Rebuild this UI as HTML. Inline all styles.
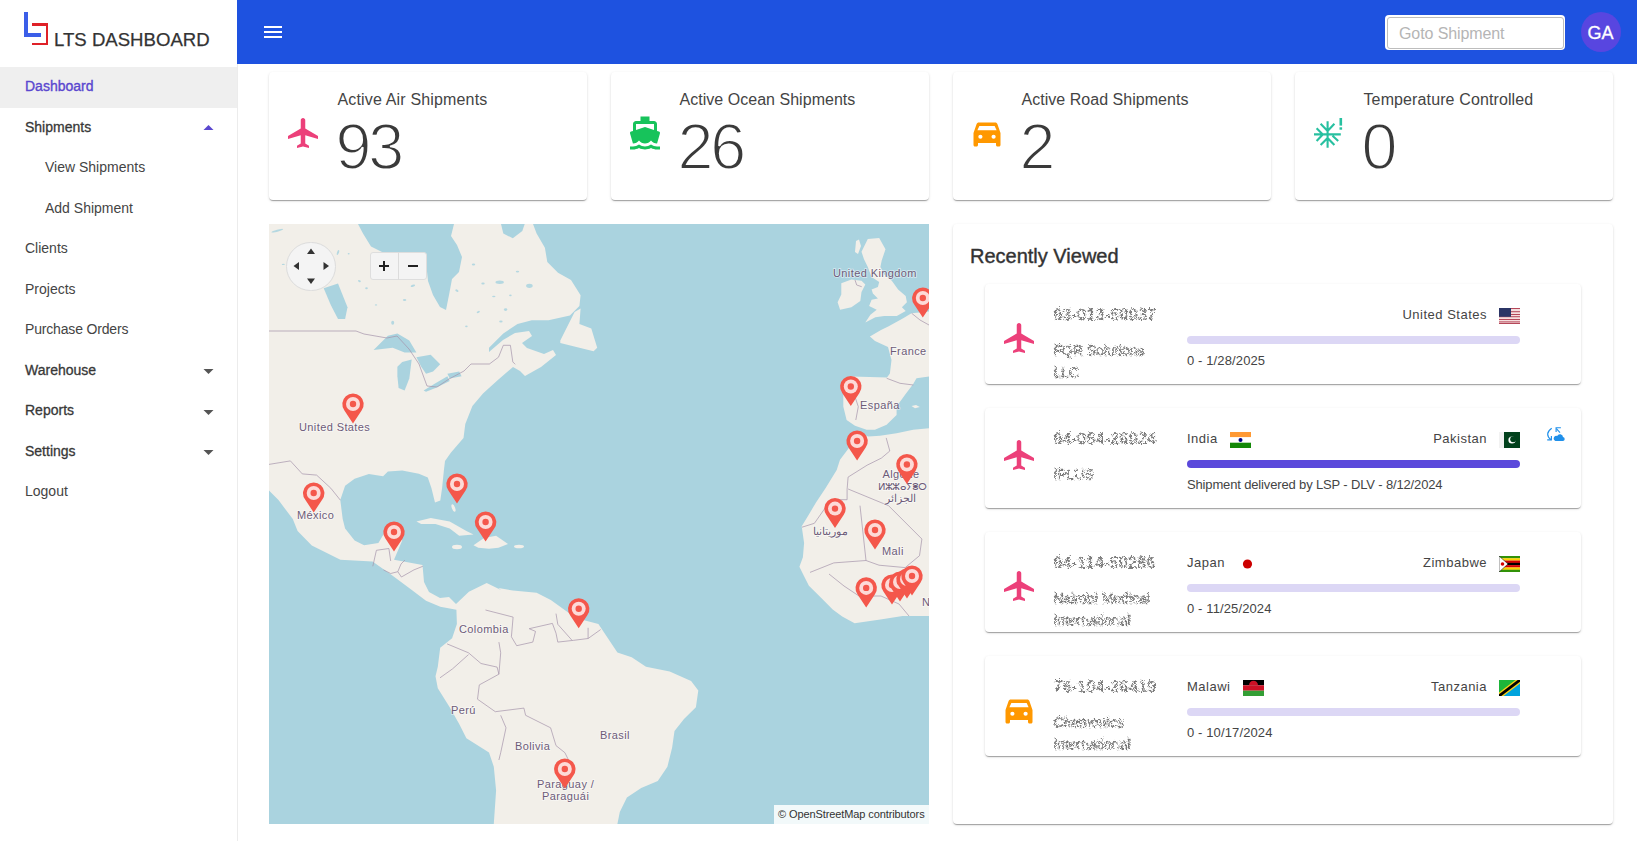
<!DOCTYPE html>
<html><head><meta charset="utf-8"><title>LTS Dashboard</title>
<style>
*{box-sizing:border-box;margin:0;padding:0}
html,body{width:1637px;height:841px;overflow:hidden;background:#fff}
body{position:relative;font-family:"Liberation Sans",sans-serif}
.abs{position:absolute}
.t{position:absolute;white-space:nowrap}
.paper{background:#fff;border-radius:4px;box-shadow:0px 2px 1px -1px rgba(0,0,0,0.2),0px 1px 1px 0px rgba(0,0,0,0.14),0px 1px 3px 0px rgba(0,0,0,0.12)}
svg{display:block}
</style></head><body>
<svg width="0" height="0" style="position:absolute"><filter id="noise" x="-5%" y="-25%" width="110%" height="150%" color-interpolation-filters="sRGB"><feTurbulence type="turbulence" baseFrequency="1.2" numOctaves="1" seed="7" result="n"/><feDisplacementMap in="SourceGraphic" in2="n" scale="4" xChannelSelector="R" yChannelSelector="B" result="d"/><feTurbulence type="fractalNoise" baseFrequency="1.6" numOctaves="1" seed="2" result="n2"/><feColorMatrix in="n2" type="matrix" values="0 0 0 0 0  0 0 0 0 0  0 0 0 0 0  0 0 0 9 -3.2" result="m"/><feComposite in="d" in2="m" operator="in" result="c"/><feGaussianBlur in="c" stdDeviation="0.25"/></filter></svg>
<div class="abs" style="left:237px;top:0;width:1px;height:841px;background:#ececec"></div>
<div class="abs" style="left:24px;top:12px;width:4px;height:24.7px;background:#3b5ee8"></div><div class="abs" style="left:24px;top:33px;width:17.2px;height:3.7px;background:#3b5ee8"></div><div class="abs" style="left:32px;top:23px;width:16.2px;height:2.7px;background:#df2128"></div><div class="abs" style="left:45.5px;top:23px;width:2.7px;height:22.2px;background:#df2128"></div><div class="abs" style="left:32px;top:42.5px;width:16.2px;height:2.7px;background:#df2128"></div>
<div class="t" style="left:54.0px;top:30.6px;font-size:18.6px;line-height:18.6px;color:#333;font-weight:400;letter-spacing:0px;-webkit-text-stroke:0.25px #333;">LTS DASHBOARD</div>
<div class="abs" style="left:0;top:67px;width:237px;height:41px;background:#efefef"></div>
<div class="t" style="left:25.0px;top:78.9px;font-size:14px;line-height:14px;color:#5a47cf;font-weight:400;letter-spacing:0px;-webkit-text-stroke:0.35px #5a47cf;">Dashboard</div>
<div class="t" style="left:25.0px;top:120.1px;font-size:14px;line-height:14px;color:#383838;font-weight:400;letter-spacing:0px;-webkit-text-stroke:0.3px #383838;">Shipments</div>
<svg class="abs" style="left:203px;top:124px" width="12" height="7"><path d="M0.5 6 L5.5 1 L10.5 6 Z" fill="#5a47cf"/></svg>
<div class="t" style="left:45.0px;top:160.1px;font-size:14px;line-height:14px;color:#444;font-weight:400;letter-spacing:0px;">View Shipments</div>
<div class="t" style="left:45.0px;top:201.1px;font-size:14px;line-height:14px;color:#444;font-weight:400;letter-spacing:0px;">Add Shipment</div>
<div class="t" style="left:25.0px;top:241.1px;font-size:14px;line-height:14px;color:#444;font-weight:400;letter-spacing:0px;">Clients</div>
<div class="t" style="left:25.0px;top:282.1px;font-size:14px;line-height:14px;color:#444;font-weight:400;letter-spacing:0px;">Projects</div>
<div class="t" style="left:25.0px;top:322.1px;font-size:14px;line-height:14px;color:#444;font-weight:400;letter-spacing:-0.17px;">Purchase Orders</div>
<div class="t" style="left:25.0px;top:363.1px;font-size:14px;line-height:14px;color:#383838;font-weight:400;letter-spacing:0px;-webkit-text-stroke:0.3px #383838;">Warehouse</div>
<div class="t" style="left:25.0px;top:403.1px;font-size:14px;line-height:14px;color:#383838;font-weight:400;letter-spacing:0px;-webkit-text-stroke:0.3px #383838;">Reports</div>
<div class="t" style="left:25.0px;top:444.1px;font-size:14px;line-height:14px;color:#383838;font-weight:400;letter-spacing:0px;-webkit-text-stroke:0.3px #383838;">Settings</div>
<div class="t" style="left:25.0px;top:484.1px;font-size:14px;line-height:14px;color:#444;font-weight:400;letter-spacing:0px;">Logout</div>
<svg class="abs" style="left:203px;top:368px" width="12" height="7"><path d="M0.5 1 L5.5 6 L10.5 1 Z" fill="#555"/></svg>
<svg class="abs" style="left:203px;top:409px" width="12" height="7"><path d="M0.5 1 L5.5 6 L10.5 1 Z" fill="#555"/></svg>
<svg class="abs" style="left:203px;top:449px" width="12" height="7"><path d="M0.5 1 L5.5 6 L10.5 1 Z" fill="#555"/></svg>
<div class="abs" style="left:237px;top:0;width:1400px;height:64px;background:#1e52e0"></div>
<svg class="abs" style="left:261px;top:20px" width="24" height="24" viewBox="0 0 24 24"><path d="M3 18h18v-2H3v2zm0-5h18v-2H3v2zm0-7v2h18V6H3z" fill="#fff"/></svg>
<div class="abs" style="left:1385px;top:15px;width:180px;height:35px;background:#fff;border-radius:4px"></div>
<div class="abs" style="left:1386.5px;top:16.5px;width:177px;height:32px;border:1px solid #bdbdbd;border-radius:3px"></div>
<div class="t" style="left:1399.0px;top:25.6px;font-size:16px;line-height:16px;color:#b5b5b5;font-weight:400;letter-spacing:-0.1px;">Goto Shipment</div>
<div class="abs" style="left:1581px;top:12px;width:40px;height:40px;border-radius:50%;background:#5846e0"></div>
<div class="t" style="left:1587.5px;top:23.9px;font-size:18px;line-height:18px;color:#fff;font-weight:400;letter-spacing:0px;-webkit-text-stroke:0.3px #fff;">GA</div>
<div class="paper abs" style="left:269px;top:72px;width:318px;height:128px"></div>
<div class="t" style="left:337.5px;top:91.6px;font-size:16px;line-height:16px;color:#444;font-weight:400;letter-spacing:0.16px;">Active Air Shipments</div>
<div class="t" style="left:335.5px;top:114.8px;font-size:64.6px;line-height:64.6px;color:#3a3a3a;font-weight:400;letter-spacing:-3.2px;-webkit-text-stroke:1.8px #fff;">93</div>
<svg class="abs" style="left:285px;top:115px" width="36" height="36" viewBox="0 0 24 24"><path d="M22 16v-2l-8.5-5V3.5c0-.83-.67-1.5-1.5-1.5s-1.5.67-1.5 1.5V9L2 14v2l8.5-2.5V19L8 20.5V22l4-1 4 1v-1.5L13.5 19v-5.5L22 16z" fill="#ec407a"/></svg>
<div class="paper abs" style="left:611px;top:72px;width:318px;height:128px"></div>
<div class="t" style="left:679.5px;top:91.6px;font-size:16px;line-height:16px;color:#444;font-weight:400;letter-spacing:0.03px;">Active Ocean Shipments</div>
<div class="t" style="left:677.5px;top:114.8px;font-size:64.6px;line-height:64.6px;color:#3a3a3a;font-weight:400;letter-spacing:-3.2px;-webkit-text-stroke:1.8px #fff;">26</div>
<svg class="abs" style="left:627px;top:114.5px" width="36" height="36" viewBox="0 0 24 24"><path d="M20 21c-1.39 0-2.78-.47-4-1.32-2.44 1.71-5.56 1.71-8 0C6.78 20.53 5.39 21 4 21H2v2h2c1.38 0 2.74-.35 4-.99 2.52 1.29 5.48 1.29 8 0 1.26.65 2.62.99 4 .99h2v-2h-2zM3.95 19H4c1.6 0 3.02-.88 4-2 .98 1.12 2.4 2 4 2s3.02-.88 4-2c.98 1.12 2.4 2 4 2h.05l1.89-6.68c.08-.26.06-.54-.06-.78s-.34-.42-.6-.5L20 10.62V6c0-1.1-.9-2-2-2h-3V1H9v3H6c-1.1 0-2 .9-2 2v4.62l-1.29.42c-.26.08-.48.26-.6.5s-.15.52-.06.78L3.95 19zM6 6h12v3.97L12 8 6 9.97V6z" fill="#17c35b"/></svg>
<div class="paper abs" style="left:953px;top:72px;width:318px;height:128px"></div>
<div class="t" style="left:1021.5px;top:91.6px;font-size:16px;line-height:16px;color:#444;font-weight:400;letter-spacing:0.03px;">Active Road Shipments</div>
<div class="t" style="left:1019.5px;top:114.8px;font-size:64.6px;line-height:64.6px;color:#3a3a3a;font-weight:400;letter-spacing:-3.2px;-webkit-text-stroke:1.8px #fff;">2</div>
<svg class="abs" style="left:969px;top:114.5px" width="36" height="36" viewBox="0 0 24 24"><path d="M6.5 5h11c.66 0 1.22.42 1.42 1.01L21 12v8c0 .55-.45 1-1 1h-1c-.55 0-1-.45-1-1v-1.3H6V20c0 .55-.45 1-1 1H4c-.55 0-1-.45-1-1v-8l2.08-5.99C5.29 5.42 5.84 5 6.5 5zM5.6 10.1L6.9 7.3H17.1L18.4 10.1ZM7.6 13.1a1.4 1.4 0 1 0 0 2.8a1.4 1.4 0 1 0 0-2.8zM16.4 13.1a1.4 1.4 0 1 0 0 2.8a1.4 1.4 0 1 0 0-2.8z" fill="#ff9800" fill-rule="evenodd"/></svg>
<div class="paper abs" style="left:1295px;top:72px;width:318px;height:128px"></div>
<div class="t" style="left:1363.5px;top:91.6px;font-size:16px;line-height:16px;color:#444;font-weight:400;letter-spacing:0.12px;">Temperature Controlled</div>
<div class="t" style="left:1361.5px;top:114.8px;font-size:64.6px;line-height:64.6px;color:#3a3a3a;font-weight:400;letter-spacing:-3.2px;-webkit-text-stroke:1.8px #fff;">0</div>
<svg class="abs" style="left:0;top:0" width="1637" height="200"><g stroke="#27c0a0" stroke-width="2.1" fill="none" stroke-linecap="butt"><path d="M1327.6 121.2V147.8M1314 134.4H1340.8M1320.6 123.8L1327.6 130.9L1334.4 123.8M1320.6 145L1327.6 137.9L1334.4 145M1316.6 128.2L1322.8 134.4L1316.6 141M1332.5 135.7L1338.2 141"/></g><rect x="1339.5" y="118" width="2.6" height="7.6" fill="#27c0a0"/><rect x="1339.5" y="127.3" width="2.6" height="2.4" fill="#27c0a0"/></svg>
<svg class="abs" style="left:269px;top:224px" width="660" height="600" viewBox="0 0 660 600"><rect width="660" height="600" fill="#aad3df"/><polygon points="0.0,0.0 264.0,0.0 267.6,9.5 275.9,23.8 278.3,38.0 289.0,48.8 302.0,55.9 311.6,71.3 310.4,82.0 300.9,91.6 279.5,96.3 262.8,96.3 248.5,99.9 234.3,109.4 220.0,123.7 220.0,128.0 234.0,116.0 246.0,109.0 260.0,107.0 263.0,112.0 253.0,119.0 258.0,124.0 275.0,130.0 284.0,126.0 287.0,131.0 272.0,143.0 256.0,152.0 251.0,147.0 244.0,143.0 230.0,155.0 220.0,164.0 214.0,169.5 203.4,182.0 196.3,199.9 194.5,214.1 182.0,228.4 176.0,237.0 174.9,246.2 173.1,264.1 171.3,276.6 166.0,278.4 162.4,264.1 158.8,253.4 149.9,249.8 133.2,246.4 118.9,247.6 114.1,252.3 99.9,250.0 85.6,254.7 76.1,261.8 71.3,276.1 73.7,295.1 76.1,304.6 85.6,316.5 95.1,321.3 109.4,318.9 116.5,307.0 128.4,307.0 133.2,316.5 125.0,335.7 153.5,341.0 155.0,358.0 160.0,368.0 171.0,374.0 180.0,373.0 187.0,380.0 199.9,367.8 217.7,358.9 232.0,366.0 229.5,364.1 243.8,366.5 267.6,368.8 281.8,376.0 298.5,387.9 310.4,395.0 329.4,400.0 338.9,414.3 348.4,428.5 362.7,433.3 377.0,442.8 400.7,447.6 422.1,457.0 429.3,466.6 426.9,483.2 415.0,495.1 405.5,507.0 403.1,523.7 398.4,542.7 388.8,557.0 372.2,564.1 357.9,573.6 350.8,587.9 348.4,600.0 224.8,600.0 227.1,566.5 224.8,542.7 220.0,528.4 197.4,514.2 190.2,499.9 180.7,483.2 168.8,464.2 166.5,452.3 168.8,442.8 171.2,423.8 183.1,414.3 187.9,400.0 187.4,385.7 171.3,382.8 157.0,376.7 142.8,366.0 121.3,350.0 103.5,337.5 71.4,335.7 42.8,321.4 28.6,307.1 23.8,295.1 9.5,276.1 0.0,266.6" fill="#f2efe9"/><polygon points="660.0,87.6 642.5,89.3 634.2,94.3 619.2,102.6 612.0,106.0 600.9,112.6 606.0,117.0 619.0,123.0 622.5,136.0 620.9,149.5 618.0,153.4 582.6,152.6 577.6,154.3 574.3,164.2 574.3,182.5 577.6,195.9 586.0,201.7 597.6,205.8 605.9,205.8 617.6,200.8 627.6,190.9 627.6,182.5 635.9,170.9 644.2,160.0 647.5,154.3 660.0,152.6" fill="#f2efe9"/><polygon points="642.5,182.0 647.0,180.9 650.8,183.0 646.0,184.2" fill="#f2efe9"/><polygon points="660.0,204.2 644.2,205.8 627.6,209.2 611.0,211.7 599.3,212.5 591.0,209.2 581.0,222.5 571.0,235.8 567.7,246.0 556.5,264.2 547.0,278.5 539.9,290.4 532.7,302.3 535.1,318.9 533.9,333.2 530.4,342.7 535.1,352.2 539.9,361.7 551.8,373.6 563.7,385.5 573.2,392.6 585.6,399.3 611.4,395.6 633.6,391.9 660.0,391.9" fill="#f2efe9"/><polygon points="598.8,15.1 610.2,13.9 616.5,25.2 612.7,36.6 611.4,42.9 615.2,50.4 622.8,56.7 629.1,65.6 636.7,71.9 637.9,78.2 632.9,83.2 636.7,87.0 627.8,92.1 615.2,92.1 606.4,93.3 596.3,98.4 601.4,90.8 607.7,85.8 600.1,82.0 602.6,75.7 608.9,74.4 603.9,69.4 602.6,65.6 608.9,63.1 610.2,58.0 602.6,53.0 598.8,42.9 595.0,35.3 592.5,27.7" fill="#f2efe9"/><polygon points="587.0,17.0 590.0,15.5 592.0,22.0 589.0,30.0 586.0,28.0" fill="#f2efe9"/><polygon points="572.3,59.3 582.4,55.5 592.5,56.7 596.3,60.5 592.5,68.1 591.3,76.9 582.4,83.2 571.1,85.8 568.6,78.2 572.3,70.6" fill="#f2efe9"/><polygon points="147.4,297.5 161.7,293.9 180.7,297.5 197.4,307.0 204.5,310.6 190.2,311.8 180.7,304.6 166.5,299.9 152.2,299.9" fill="#f2efe9"/><polygon points="204.5,321.3 215.0,314.0 227.1,311.8 239.0,320.1 229.5,323.7 220.0,324.8 209.3,323.7" fill="#f2efe9"/><polygon points="291.3,116.5 305.6,88.0 311.6,84.4 310.4,99.9 322.3,104.6 328.2,123.7 324.6,127.2 310.4,123.7 291.3,118.9" fill="#f2efe9"/><ellipse cx="184.5" cy="284" rx="1.6" ry="4" fill="#f2efe9" transform="rotate(-20 184.5 284)"/><ellipse cx="188" cy="323" rx="5" ry="2.2" fill="#f2efe9"/><ellipse cx="250" cy="322.5" rx="5" ry="1.8" fill="#f2efe9"/><ellipse cx="8.3" cy="6.7" rx="6.0" ry="1.0" transform="rotate(-15 8.3 6.7)" fill="#aad3df" opacity="0.85"/><ellipse cx="69.0" cy="28.5" rx="1.0" ry="2.6" transform="rotate(20 69.0 28.5)" fill="#aad3df" opacity="0.85"/><ellipse cx="57.1" cy="36.9" rx="1.2" ry="2.0" transform="rotate(30 57.1 36.9)" fill="#aad3df" opacity="0.85"/><ellipse cx="40.4" cy="46.4" rx="1.7" ry="0.7" transform="rotate(0 40.4 46.4)" fill="#aad3df" opacity="0.85"/><ellipse cx="79.7" cy="29.7" rx="1.0" ry="0.7" transform="rotate(0 79.7 29.7)" fill="#aad3df" opacity="0.85"/><ellipse cx="90.4" cy="57.1" rx="1.5" ry="0.9" transform="rotate(20 90.4 57.1)" fill="#aad3df" opacity="0.85"/><ellipse cx="97.5" cy="64.2" rx="1.3" ry="1.0" transform="rotate(0 97.5 64.2)" fill="#aad3df" opacity="0.85"/><ellipse cx="121.3" cy="54.7" rx="1.7" ry="0.9" transform="rotate(0 121.3 54.7)" fill="#aad3df" opacity="0.85"/><ellipse cx="135.6" cy="76.1" rx="1.7" ry="1.0" transform="rotate(0 135.6 76.1)" fill="#aad3df" opacity="0.85"/><ellipse cx="143.9" cy="61.8" rx="2.3" ry="1.0" transform="rotate(-20 143.9 61.8)" fill="#aad3df" opacity="0.85"/><ellipse cx="168.8" cy="72.5" rx="1.5" ry="0.7" transform="rotate(0 168.8 72.5)" fill="#aad3df" opacity="0.85"/><ellipse cx="187.9" cy="66.6" rx="1.7" ry="1.1" transform="rotate(30 187.9 66.6)" fill="#aad3df" opacity="0.85"/><ellipse cx="204.5" cy="40.4" rx="1.7" ry="1.0" transform="rotate(0 204.5 40.4)" fill="#aad3df" opacity="0.85"/><ellipse cx="209.3" cy="88.0" rx="1.7" ry="1.0" transform="rotate(-30 209.3 88.0)" fill="#aad3df" opacity="0.85"/><ellipse cx="214.0" cy="59.5" rx="1.7" ry="0.9" transform="rotate(0 214.0 59.5)" fill="#aad3df" opacity="0.85"/><ellipse cx="197.4" cy="102.3" rx="1.3" ry="0.9" transform="rotate(0 197.4 102.3)" fill="#aad3df" opacity="0.85"/><ellipse cx="123.7" cy="98.7" rx="1.5" ry="2.0" transform="rotate(0 123.7 98.7)" fill="#aad3df" opacity="0.85"/><ellipse cx="154.6" cy="47.6" rx="1.3" ry="0.7" transform="rotate(0 154.6 47.6)" fill="#aad3df" opacity="0.85"/><ellipse cx="107.0" cy="80.9" rx="1.2" ry="0.7" transform="rotate(0 107.0 80.9)" fill="#aad3df" opacity="0.85"/><ellipse cx="71.3" cy="78.5" rx="1.3" ry="0.7" transform="rotate(0 71.3 78.5)" fill="#aad3df" opacity="0.85"/><ellipse cx="30.9" cy="28.5" rx="1.3" ry="0.6" transform="rotate(0 30.9 28.5)" fill="#aad3df" opacity="0.85"/><ellipse cx="14.3" cy="40.4" rx="1.5" ry="0.7" transform="rotate(0 14.3 40.4)" fill="#aad3df" opacity="0.85"/><ellipse cx="230.7" cy="58.3" rx="4.2" ry="1.7" transform="rotate(0 230.7 58.3)" fill="#aad3df" opacity="0.85"/><ellipse cx="260.4" cy="61.8" rx="3.3" ry="2.1" transform="rotate(0 260.4 61.8)" fill="#aad3df" opacity="0.85"/><ellipse cx="236.6" cy="85.6" rx="1.7" ry="1.4" transform="rotate(0 236.6 85.6)" fill="#aad3df" opacity="0.85"/><ellipse cx="224.8" cy="72.5" rx="1.7" ry="0.7" transform="rotate(0 224.8 72.5)" fill="#aad3df" opacity="0.85"/><ellipse cx="231.9" cy="97.5" rx="1.7" ry="1.1" transform="rotate(0 231.9 97.5)" fill="#aad3df" opacity="0.85"/><ellipse cx="248.5" cy="47.6" rx="1.7" ry="0.9" transform="rotate(0 248.5 47.6)" fill="#aad3df" opacity="0.85"/><ellipse cx="241.4" cy="71.3" rx="1.3" ry="0.9" transform="rotate(0 241.4 71.3)" fill="#aad3df" opacity="0.85"/><polygon points="89.0,0.0 94.0,9.5 102.0,22.6 114.0,28.5 143.0,35.7 158.0,47.6 159.0,57.0 164.0,71.0 171.0,83.0 177.0,86.0 180.0,71.0 183.0,55.0 190.0,48.0 193.0,33.0 188.0,21.0 182.0,12.0 185.0,0.0" fill="#aad3df"/><polygon points="232.0,0.0 234.3,9.5 243.8,14.3 253.3,7.1 255.7,0.0" fill="#aad3df"/><polygon points="104.6,126.0 118.9,111.8 128.4,109.4 140.3,116.5 147.4,128.4 135.6,128.4 123.7,123.7" fill="#aad3df"/><polygon points="128.4,142.7 133.2,137.9 142.7,135.6 140.3,154.6 135.6,166.5 129.6,164.1 128.4,152.2" fill="#aad3df"/><polygon points="147.4,133.2 161.7,130.8 171.2,140.3 164.1,147.4 157.0,149.8 152.2,142.7" fill="#aad3df"/><polygon points="154.6,166.5 166.5,159.3 178.4,152.2 180.7,157.0 166.5,164.1 157.0,167.7" fill="#aad3df"/><polygon points="178.4,149.8 190.2,147.4 192.6,152.2 180.7,154.6" fill="#aad3df"/><polygon points="54.7,64.2 69.0,59.5 78.5,83.2 76.1,95.1 69.0,95.1 61.8,80.9" fill="#aad3df"/><polyline points="617.2,213.9 620.8,227.0 612.4,234.1 598.1,241.2 579.1,253.1 578.1,265.3 578.1,275.7 562.4,275.7 554.6,286.2 545.4,299.3 533.0,303.2" fill="none" stroke="#a593ab" stroke-width="0.7"/><polyline points="579.1,265.0 619.6,281.7 652.9,315.0 650.5,331.7 636.2,343.6 610.0,341.2 597.0,336.5" fill="none" stroke="#a593ab" stroke-width="0.7"/><polyline points="591.0,281.7 597.0,336.5 564.8,338.9 541.0,348.4" fill="none" stroke="#a593ab" stroke-width="0.7"/><polyline points="586.0,172.7 589.3,182.7 586.8,196.0" fill="none" stroke="#a593ab" stroke-width="0.7"/><polyline points="617.7,154.3 631.0,159.3 644.3,161.0" fill="none" stroke="#a593ab" stroke-width="0.7"/><polyline points="642.7,89.3 651.0,96.0 660.0,101.0" fill="none" stroke="#a593ab" stroke-width="0.7"/><polyline points="586.0,56.0 587.7,61.0 592.7,62.7" fill="none" stroke="#a593ab" stroke-width="0.7"/><polyline points="220.0,140.3 229.5,133.2 234.3,121.3 241.4,121.3 243.8,137.9 246.2,140.3" fill="none" stroke="#a593ab" stroke-width="0.7"/><polyline points="560.0,350.0 575.0,362.0 590.0,372.0 612.0,372.0 630.0,380.0 640.0,392.0" fill="none" stroke="#a593ab" stroke-width="0.7"/><polyline points="103.8,342.3 107.4,326.3 119.9,324.5 121.7,337.0" fill="none" stroke="#a593ab" stroke-width="0.7"/><polyline points="114.5,345.9 121.7,349.5 128.8,347.7 132.4,353.0 144.9,345.9 153.8,342.3" fill="none" stroke="#a593ab" stroke-width="0.7"/><polyline points="128.8,347.7 132.0,340.0 136.0,336.0" fill="none" stroke="#a593ab" stroke-width="0.7"/><polyline points="216.5,386.0 244.1,393.1 242.4,412.8 247.7,421.7 263.8,418.1 266.5,407.4 260.2,404.7 283.4,399.4 287.0,409.2 288.8,418.1 304.8,416.3 319.1,414.5 331.6,405.6" fill="none" stroke="#a593ab" stroke-width="0.7"/><polyline points="229.9,418.1 231.7,428.8 229.9,450.2 210.3,460.9 208.5,475.2 226.3,487.7 254.9,484.1 256.6,491.3 281.6,503.8 287.0,521.6 295.9,528.7 299.5,536.0" fill="none" stroke="#a593ab" stroke-width="0.7"/><polyline points="178.1,419.9 199.5,428.8 212.0,439.5 228.1,443.1 229.9,450.2" fill="none" stroke="#a593ab" stroke-width="0.7"/><polyline points="171.0,453.8 183.5,444.9 199.5,430.6" fill="none" stroke="#a593ab" stroke-width="0.7"/><polyline points="231.7,491.3 237.0,503.8 231.7,528.7 229.9,536.0" fill="none" stroke="#a593ab" stroke-width="0.7"/><polyline points="287.0,389.6 288.8,400.3 303.0,416.3" fill="none" stroke="#a593ab" stroke-width="0.7"/><polyline points="319.1,403.8 319.1,414.5" fill="none" stroke="#a593ab" stroke-width="0.7"/><polyline points="0.0,107.0 87.0,107.0 95.0,110.0 118.0,114.0 128.0,112.0 140.0,125.0 150.0,140.0 158.0,162.0 168.0,163.0 180.0,155.0 195.0,147.0 202.0,140.0 220.0,140.0" fill="none" stroke="#a593ab" stroke-width="0.7"/><polyline points="0.0,240.4 21.4,236.9 33.3,249.9 47.6,251.1 61.8,264.2 71.3,276.1" fill="none" stroke="#a593ab" stroke-width="0.7"/><text x="30" y="207" font-family="Liberation Sans" font-size="11" fill="#6d5b78" letter-spacing="0.4" stroke="rgba(255,255,255,0.55)" stroke-width="1.6" paint-order="stroke">United States</text><text x="28" y="295" font-family="Liberation Sans" font-size="11" fill="#6d5b78" letter-spacing="0.4" stroke="rgba(255,255,255,0.55)" stroke-width="1.6" paint-order="stroke">México</text><text x="190" y="409" font-family="Liberation Sans" font-size="11" fill="#6d5b78" letter-spacing="0.4" stroke="rgba(255,255,255,0.55)" stroke-width="1.6" paint-order="stroke">Colombia</text><text x="182" y="490" font-family="Liberation Sans" font-size="11" fill="#6d5b78" letter-spacing="0.4" stroke="rgba(255,255,255,0.55)" stroke-width="1.6" paint-order="stroke">Perú</text><text x="331" y="515" font-family="Liberation Sans" font-size="11" fill="#6d5b78" letter-spacing="0.4" stroke="rgba(255,255,255,0.55)" stroke-width="1.6" paint-order="stroke">Brasil</text><text x="246" y="526" font-family="Liberation Sans" font-size="11" fill="#6d5b78" letter-spacing="0.4" stroke="rgba(255,255,255,0.55)" stroke-width="1.6" paint-order="stroke">Bolivia</text><text x="268" y="564" font-family="Liberation Sans" font-size="11" fill="#6d5b78" letter-spacing="0.4" stroke="rgba(255,255,255,0.55)" stroke-width="1.6" paint-order="stroke">Paraguay /</text><text x="273" y="576" font-family="Liberation Sans" font-size="11" fill="#6d5b78" letter-spacing="0.4" stroke="rgba(255,255,255,0.55)" stroke-width="1.6" paint-order="stroke">Paraguái</text><text x="564" y="53" font-family="Liberation Sans" font-size="11" fill="#6d5b78" letter-spacing="0.4" stroke="rgba(255,255,255,0.55)" stroke-width="1.6" paint-order="stroke">United Kingdom</text><text x="621" y="131" font-family="Liberation Sans" font-size="11" fill="#6d5b78" letter-spacing="0.4" stroke="rgba(255,255,255,0.55)" stroke-width="1.6" paint-order="stroke">France</text><text x="591" y="185" font-family="Liberation Sans" font-size="11" fill="#6d5b78" letter-spacing="0.4" stroke="rgba(255,255,255,0.55)" stroke-width="1.6" paint-order="stroke">España</text><text x="613.5" y="254" font-family="Liberation Sans" font-size="11" fill="#6d5b78" letter-spacing="0.4" stroke="rgba(255,255,255,0.55)" stroke-width="1.6" paint-order="stroke">Algérie</text><text x="609" y="266" font-family="Liberation Sans" font-size="9.5" fill="#6d5b78" letter-spacing="-0.3" stroke="rgba(255,255,255,0.55)" stroke-width="1.6" paint-order="stroke">ⵍⵣⵣⴰⵢⴻⵔ</text><text x="616" y="278" font-family="Liberation Sans" font-size="11" fill="#6d5b78" letter-spacing="0.4" stroke="rgba(255,255,255,0.55)" stroke-width="1.6" paint-order="stroke">الجزائر</text><text x="544" y="311" font-family="Liberation Sans" font-size="11" fill="#6d5b78" letter-spacing="0.4" stroke="rgba(255,255,255,0.55)" stroke-width="1.6" paint-order="stroke">موريتانيا</text><text x="613" y="331" font-family="Liberation Sans" font-size="11" fill="#6d5b78" letter-spacing="0.4" stroke="rgba(255,255,255,0.55)" stroke-width="1.6" paint-order="stroke">Mali</text><text x="653" y="382" font-family="Liberation Sans" font-size="11" fill="#6d5b78" letter-spacing="0.4" stroke="rgba(255,255,255,0.55)" stroke-width="1.6" paint-order="stroke">N</text><g transform="translate(84.0,180.0)"><path d="M-8.6 6.5A10.7 10.7 0 1 1 8.6 6.5L0 19.5Z" fill="#f4574b"/><circle r="7" fill="#fff" opacity="0.78"/><circle r="3.2" fill="#f4574b"/></g><g transform="translate(44.7,269.0)"><path d="M-8.6 6.5A10.7 10.7 0 1 1 8.6 6.5L0 19.5Z" fill="#f4574b"/><circle r="7" fill="#fff" opacity="0.78"/><circle r="3.2" fill="#f4574b"/></g><g transform="translate(188.0,260.0)"><path d="M-8.6 6.5A10.7 10.7 0 1 1 8.6 6.5L0 19.5Z" fill="#f4574b"/><circle r="7" fill="#fff" opacity="0.78"/><circle r="3.2" fill="#f4574b"/></g><g transform="translate(125.0,308.0)"><path d="M-8.6 6.5A10.7 10.7 0 1 1 8.6 6.5L0 19.5Z" fill="#f4574b"/><circle r="7" fill="#fff" opacity="0.78"/><circle r="3.2" fill="#f4574b"/></g><g transform="translate(216.6,298.0)"><path d="M-8.6 6.5A10.7 10.7 0 1 1 8.6 6.5L0 19.5Z" fill="#f4574b"/><circle r="7" fill="#fff" opacity="0.78"/><circle r="3.2" fill="#f4574b"/></g><g transform="translate(309.7,384.8)"><path d="M-8.6 6.5A10.7 10.7 0 1 1 8.6 6.5L0 19.5Z" fill="#f4574b"/><circle r="7" fill="#fff" opacity="0.78"/><circle r="3.2" fill="#f4574b"/></g><g transform="translate(295.8,545.0)"><path d="M-8.6 6.5A10.7 10.7 0 1 1 8.6 6.5L0 19.5Z" fill="#f4574b"/><circle r="7" fill="#fff" opacity="0.78"/><circle r="3.2" fill="#f4574b"/></g><g transform="translate(653.8,74.0)"><path d="M-8.6 6.5A10.7 10.7 0 1 1 8.6 6.5L0 19.5Z" fill="#f4574b"/><circle r="7" fill="#fff" opacity="0.78"/><circle r="3.2" fill="#f4574b"/></g><g transform="translate(581.8,162.5)"><path d="M-8.6 6.5A10.7 10.7 0 1 1 8.6 6.5L0 19.5Z" fill="#f4574b"/><circle r="7" fill="#fff" opacity="0.78"/><circle r="3.2" fill="#f4574b"/></g><g transform="translate(588.1,217.0)"><path d="M-8.6 6.5A10.7 10.7 0 1 1 8.6 6.5L0 19.5Z" fill="#f4574b"/><circle r="7" fill="#fff" opacity="0.78"/><circle r="3.2" fill="#f4574b"/></g><g transform="translate(637.9,240.5)"><path d="M-8.6 6.5A10.7 10.7 0 1 1 8.6 6.5L0 19.5Z" fill="#f4574b"/><circle r="7" fill="#fff" opacity="0.78"/><circle r="3.2" fill="#f4574b"/></g><g transform="translate(566.0,284.6)"><path d="M-8.6 6.5A10.7 10.7 0 1 1 8.6 6.5L0 19.5Z" fill="#f4574b"/><circle r="7" fill="#fff" opacity="0.78"/><circle r="3.2" fill="#f4574b"/></g><g transform="translate(606.0,306.0)"><path d="M-8.6 6.5A10.7 10.7 0 1 1 8.6 6.5L0 19.5Z" fill="#f4574b"/><circle r="7" fill="#fff" opacity="0.78"/><circle r="3.2" fill="#f4574b"/></g><g transform="translate(597.2,363.9)"><path d="M-8.6 6.5A10.7 10.7 0 1 1 8.6 6.5L0 19.5Z" fill="#f4574b"/><circle r="7" fill="#fff" opacity="0.78"/><circle r="3.2" fill="#f4574b"/></g><g transform="translate(623.0,361.0)"><path d="M-8.6 6.5A10.7 10.7 0 1 1 8.6 6.5L0 19.5Z" fill="#f4574b"/><circle r="7" fill="#fff" opacity="0.78"/><circle r="3.2" fill="#f4574b"/></g><g transform="translate(631.0,358.0)"><path d="M-8.6 6.5A10.7 10.7 0 1 1 8.6 6.5L0 19.5Z" fill="#f4574b"/><circle r="7" fill="#fff" opacity="0.78"/><circle r="3.2" fill="#f4574b"/></g><g transform="translate(638.0,355.0)"><path d="M-8.6 6.5A10.7 10.7 0 1 1 8.6 6.5L0 19.5Z" fill="#f4574b"/><circle r="7" fill="#fff" opacity="0.78"/><circle r="3.2" fill="#f4574b"/></g><g transform="translate(643.0,352.0)"><path d="M-8.6 6.5A10.7 10.7 0 1 1 8.6 6.5L0 19.5Z" fill="#f4574b"/><circle r="7" fill="#fff" opacity="0.78"/><circle r="3.2" fill="#f4574b"/></g></svg>
<div class="abs" style="left:286px;top:241.5px;width:49.5px;height:49.5px;border-radius:50%;background:#f4f4f4;border:1px solid #dcdcdc"></div>
<svg class="abs" style="left:286px;top:241px" width="50" height="50"><g fill="#333"><path d="M25 7.5L29 13H21Z"/><path d="M25 43L29 37.5H21Z"/><path d="M7.5 25L13 21V29Z"/><path d="M43 25L37.5 21V29Z"/></g></svg>
<div class="abs" style="left:370px;top:251.7px;width:57px;height:28.3px;border-radius:3px;background:#f4f4f4;border:1px solid #dedede"></div>
<div class="abs" style="left:398px;top:252px;width:1px;height:28px;background:#dcdcdc"></div>
<svg class="abs" style="left:370px;top:252px" width="57" height="28"><g fill="#222"><rect x="9" y="13" width="10" height="2"/><rect x="13" y="9" width="2" height="10"/><rect x="38" y="13" width="10" height="2"/></g></svg>
<div class="abs" style="left:774px;top:805px;width:155px;height:19px;background:rgba(255,255,255,.85)"></div>
<div class="t" style="left:778.0px;top:809.1px;font-size:11px;line-height:11px;color:#333;font-weight:400;letter-spacing:-0.1px;">© OpenStreetMap contributors</div>
<div class="paper abs" style="left:953px;top:224px;width:660px;height:600px"></div>
<div class="t" style="left:970.0px;top:245.8px;font-size:20px;line-height:20px;color:#333;font-weight:400;letter-spacing:0px;-webkit-text-stroke:0.4px #333;">Recently Viewed</div>
<div class="paper abs" style="left:985px;top:284px;width:596px;height:100px"></div>
<svg class="abs" style="left:1001px;top:320px" width="36" height="36" viewBox="0 0 24 24"><path d="M22 16v-2l-8.5-5V3.5c0-.83-.67-1.5-1.5-1.5s-1.5.67-1.5 1.5V9L2 14v2l8.5-2.5V19L8 20.5V22l4-1 4 1v-1.5L13.5 19v-5.5L22 16z" fill="#ec407a"/></svg>
<div class="t" style="left:1052.0px;top:304.8px;font-size:16.5px;line-height:16.5px;color:#7c7c7c;font-weight:700;letter-spacing:0px;filter:url(#noise);">93-013-50037</div>
<div class="t" style="left:1052.0px;top:341.7px;font-size:14px;line-height:14px;color:#777;font-weight:400;letter-spacing:0px;-webkit-text-stroke:0.5px #777;filter:url(#noise);">FQR Solutions</div>
<div class="t" style="left:1052.0px;top:363.7px;font-size:14px;line-height:14px;color:#777;font-weight:400;letter-spacing:0px;-webkit-text-stroke:0.5px #777;filter:url(#noise);">LLC</div>
<div class="t" style="right:150px;top:307.9px;font-size:13px;line-height:13px;color:#444;letter-spacing:0.5px">United States</div>
<svg class="abs" style="left:1499px;top:308px" width="21" height="16" viewBox="0 0 21 16"><rect width="21" height="16" fill="#f6dede"/><rect x="0" y="0" width="21" height="1" fill="#b5485a"/><rect x="0" y="3.2" width="21" height="1" fill="#b5485a"/><rect x="0" y="6.0" width="21" height="1" fill="#b5485a"/><rect x="0" y="8.2" width="21" height="1" fill="#b5485a"/><rect x="0" y="11.0" width="21" height="1" fill="#b5485a"/><rect x="0" y="13.4" width="21" height="1" fill="#b5485a"/><rect x="0" y="15.0" width="21" height="1" fill="#b5485a"/><rect x="0" y="0" width="12" height="8.8" fill="#2b3566"/></svg><div class="abs" style="left:1187px;top:336px;width:333px;height:8px;border-radius:4px;background:#dcd7f5;overflow:hidden"><div style="width:0.0%;height:100%;background:#5b49db"></div></div>
<div class="t" style="left:1187.0px;top:353.9px;font-size:13px;line-height:13px;color:#444;font-weight:400;letter-spacing:0.12px;">0 - 1/28/2025</div>
<div class="paper abs" style="left:985px;top:408px;width:596px;height:100px"></div>
<svg class="abs" style="left:1001px;top:437px" width="36" height="36" viewBox="0 0 24 24"><path d="M22 16v-2l-8.5-5V3.5c0-.83-.67-1.5-1.5-1.5s-1.5.67-1.5 1.5V9L2 14v2l8.5-2.5V19L8 20.5V22l4-1 4 1v-1.5L13.5 19v-5.5L22 16z" fill="#ec407a"/></svg>
<div class="t" style="left:1052.0px;top:428.8px;font-size:16.5px;line-height:16.5px;color:#7c7c7c;font-weight:700;letter-spacing:0px;filter:url(#noise);">94-064-26024</div>
<div class="t" style="left:1052.0px;top:465.7px;font-size:14px;line-height:14px;color:#777;font-weight:400;letter-spacing:0px;-webkit-text-stroke:0.5px #777;filter:url(#noise);">IPLUS</div>
<div class="t" style="left:1187.0px;top:431.9px;font-size:13px;line-height:13px;color:#444;font-weight:400;letter-spacing:0.5px;">India</div>
<svg class="abs" style="left:1230px;top:432px" width="21" height="16" viewBox="0 0 21 16"><rect width="21" height="5.3" fill="#ff9933"/><rect y="5.3" width="21" height="5.4" fill="#fff"/><rect y="10.7" width="21" height="5.3" fill="#138808"/><circle cx="10.5" cy="8" r="2" fill="#000080"/></svg><div class="t" style="right:150px;top:431.9px;font-size:13px;line-height:13px;color:#444;letter-spacing:0.5px">Pakistan</div>
<svg class="abs" style="left:1499px;top:432px" width="21" height="16" viewBox="0 0 21 16"><rect width="5" height="16" fill="#f2f2f2"/><rect x="5" width="16" height="16" fill="#01411c"/><circle cx="13" cy="8" r="3.6" fill="#fff"/><circle cx="14.2" cy="7.2" r="3" fill="#01411c"/></svg><div class="abs" style="left:1187px;top:460px;width:333px;height:8px;border-radius:4px;background:#dcd7f5;overflow:hidden"><div style="width:100.0%;height:100%;background:#5b49db"></div></div>
<div class="t" style="left:1187.0px;top:477.9px;font-size:13px;line-height:13px;color:#444;font-weight:400;letter-spacing:-0.15px;">Shipment delivered by LSP - DLV - 8/12/2024</div>
<svg class="abs" style="left:1540px;top:420px" width="32" height="28" viewBox="0 0 32 28"><g fill="none" stroke="#2090ea" stroke-width="1.15"><path d="M11.7 8.3Q4 13.8 11 19.8"/><path d="M7.2 19.9H11.4V16"/><path d="M20 12.7L16.4 8.6"/><path d="M20.9 7.7H16.1V12"/></g><path d="M15.4 20.9H22.6A1.9 1.9 0 0 0 23 17.1A3 3 0 0 0 17.2 16.1A2.4 2.4 0 0 0 15.4 20.9Z" fill="#2090ea"/></svg>
<div class="paper abs" style="left:985px;top:532px;width:596px;height:100px"></div>
<svg class="abs" style="left:1001px;top:568px" width="36" height="36" viewBox="0 0 24 24"><path d="M22 16v-2l-8.5-5V3.5c0-.83-.67-1.5-1.5-1.5s-1.5.67-1.5 1.5V9L2 14v2l8.5-2.5V19L8 20.5V22l4-1 4 1v-1.5L13.5 19v-5.5L22 16z" fill="#ec407a"/></svg>
<div class="t" style="left:1052.0px;top:552.8px;font-size:16.5px;line-height:16.5px;color:#7c7c7c;font-weight:700;letter-spacing:0px;filter:url(#noise);">94-114-50286</div>
<div class="t" style="left:1052.0px;top:589.7px;font-size:14px;line-height:14px;color:#777;font-weight:400;letter-spacing:0px;-webkit-text-stroke:0.5px #777;filter:url(#noise);">Nairobi Medical</div>
<div class="t" style="left:1052.0px;top:611.7px;font-size:14px;line-height:14px;color:#777;font-weight:400;letter-spacing:0px;-webkit-text-stroke:0.5px #777;filter:url(#noise);">International</div>
<div class="t" style="left:1187.0px;top:556.0px;font-size:13px;line-height:13px;color:#444;font-weight:400;letter-spacing:0.5px;">Japan</div>
<svg class="abs" style="left:1237px;top:556px" width="21" height="16" viewBox="0 0 21 16"><circle cx="10.5" cy="8" r="4.6" fill="#cc0000"/></svg><div class="t" style="right:150px;top:556.0px;font-size:13px;line-height:13px;color:#444;letter-spacing:0.5px">Zimbabwe</div>
<svg class="abs" style="left:1499px;top:556px" width="21" height="16" viewBox="0 0 21 16"><rect y="0.00" width="21" height="2.39" fill="#319208"/><rect y="2.29" width="21" height="2.39" fill="#ffd200"/><rect y="4.57" width="21" height="2.39" fill="#d40000"/><rect y="6.86" width="21" height="2.39" fill="#000"/><rect y="9.14" width="21" height="2.39" fill="#d40000"/><rect y="11.43" width="21" height="2.39" fill="#ffd200"/><rect y="13.71" width="21" height="2.39" fill="#319208"/><path d="M0 0L9 8L0 16Z" fill="#fff" stroke="#000" stroke-width="0.5"/><circle cx="3.5" cy="8" r="1.8" fill="#d40000"/></svg><div class="abs" style="left:1187px;top:584px;width:333px;height:8px;border-radius:4px;background:#dcd7f5;overflow:hidden"><div style="width:0.0%;height:100%;background:#5b49db"></div></div>
<div class="t" style="left:1187.0px;top:602.0px;font-size:13px;line-height:13px;color:#444;font-weight:400;letter-spacing:0.12px;">0 - 11/25/2024</div>
<div class="paper abs" style="left:985px;top:656px;width:596px;height:100px"></div>
<svg class="abs" style="left:1000.7px;top:691.5px" width="36" height="36" viewBox="0 0 24 24"><path d="M6.5 5h11c.66 0 1.22.42 1.42 1.01L21 12v8c0 .55-.45 1-1 1h-1c-.55 0-1-.45-1-1v-1.3H6V20c0 .55-.45 1-1 1H4c-.55 0-1-.45-1-1v-8l2.08-5.99C5.29 5.42 5.84 5 6.5 5zM5.6 10.1L6.9 7.3H17.1L18.4 10.1ZM7.6 13.1a1.4 1.4 0 1 0 0 2.8a1.4 1.4 0 1 0 0-2.8zM16.4 13.1a1.4 1.4 0 1 0 0 2.8a1.4 1.4 0 1 0 0-2.8z" fill="#ff9800" fill-rule="evenodd"/></svg>
<div class="t" style="left:1052.0px;top:676.8px;font-size:16.5px;line-height:16.5px;color:#7c7c7c;font-weight:700;letter-spacing:0px;filter:url(#noise);">76-104-36419</div>
<div class="t" style="left:1052.0px;top:713.7px;font-size:14px;line-height:14px;color:#777;font-weight:400;letter-spacing:0px;-webkit-text-stroke:0.5px #777;filter:url(#noise);">Chemonics</div>
<div class="t" style="left:1052.0px;top:735.7px;font-size:14px;line-height:14px;color:#777;font-weight:400;letter-spacing:0px;-webkit-text-stroke:0.5px #777;filter:url(#noise);">International</div>
<div class="t" style="left:1187.0px;top:680.0px;font-size:13px;line-height:13px;color:#444;font-weight:400;letter-spacing:0.5px;">Malawi</div>
<svg class="abs" style="left:1242.5px;top:680px" width="21" height="16" viewBox="0 0 21 16"><rect width="21" height="5.3" fill="#000"/><rect y="5.3" width="21" height="5.4" fill="#ce1126"/><rect y="10.7" width="21" height="5.3" fill="#339e35"/><path d="M6 5.3A4.5 4.5 0 0 1 15 5.3Z" fill="#ce1126"/></svg><div class="t" style="right:150px;top:680.0px;font-size:13px;line-height:13px;color:#444;letter-spacing:0.5px">Tanzania</div>
<svg class="abs" style="left:1499px;top:680px" width="21" height="16" viewBox="0 0 21 16"><path d="M0 0H21L0 16Z" fill="#1eb53a"/><path d="M21 0V16H0Z" fill="#00a3dd"/><path d="M0 16L0 12.5L16.5 0H21V3.5L4.5 16Z" fill="#fcd116"/><path d="M0 16L0 14.3L18.7 0H21V1.7L2.3 16Z" fill="#000"/></svg><div class="abs" style="left:1187px;top:708px;width:333px;height:8px;border-radius:4px;background:#dcd7f5;overflow:hidden"><div style="width:0.0%;height:100%;background:#5b49db"></div></div>
<div class="t" style="left:1187.0px;top:726.0px;font-size:13px;line-height:13px;color:#444;font-weight:400;letter-spacing:0.12px;">0 - 10/17/2024</div>
</body></html>
